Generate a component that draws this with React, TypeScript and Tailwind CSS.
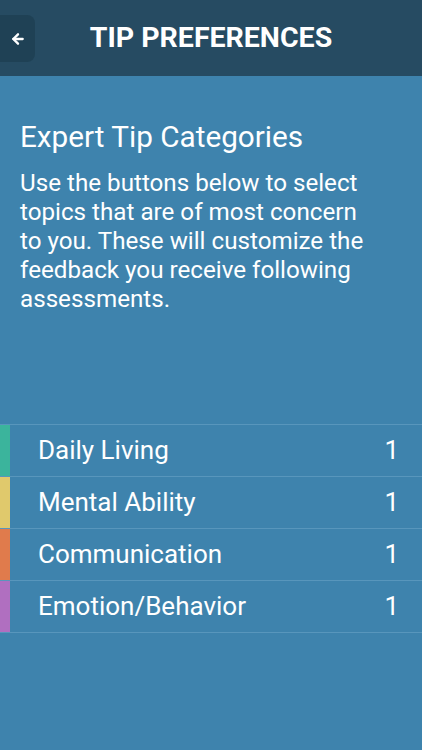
import { ArrowLeft } from 'lucide-react';

const categories = [
  { name: 'Daily Living', count: 1, color: 'bg-[#3bb49c]' },
  { name: 'Mental Ability', count: 1, color: 'bg-[#e0c96c]' },
  { name: 'Communication', count: 1, color: 'bg-[#e07b4c]' },
  { name: 'Emotion/Behavior', count: 1, color: 'bg-[#b06fc0]' },
];

export default function App() {
  return (
    <div className="w-[422px] h-[750px] bg-[#3e83ad] text-white font-['Roboto',sans-serif] flex flex-col overflow-hidden">
      <header className="h-[76px] bg-[#264b62] flex items-center relative shrink-0">
        <button className="absolute left-0 top-[15px] w-[35px] h-[47px] bg-[#1f4155] rounded-r-lg flex items-center justify-center" aria-label="Back">
          <ArrowLeft className="w-4 h-4" strokeWidth={3.5} />
        </button>
        <h1 className="w-full text-center text-[28.5px] font-bold">TIP PREFERENCES</h1>
      </header>

      <section className="pl-5 pr-12 pt-[43px]">
        <h2 className="text-[29.7px] font-normal leading-[36px]">Expert Tip Categories</h2>
        <p className="mt-[14px] text-[24.2px] font-normal leading-[29px]">
          Use the buttons below to select topics that are of most concern to you. These will customize the feedback you receive following assessments.
        </p>
      </section>

      <ul className="mt-[110px] border-t border-[#5896bc]">
        {categories.map((c) => (
          <li key={c.name} className="h-[52px] flex items-stretch border-b border-[#5896bc]">
            <span className={`w-[10px] ${c.color}`} />
            <span className="flex-1 flex items-center justify-between pl-7 pr-[23px] text-[26px] font-normal">
              <span>{c.name}</span>
              <span>{c.count}</span>
            </span>
          </li>
        ))}
      </ul>
    </div>
  );
}
